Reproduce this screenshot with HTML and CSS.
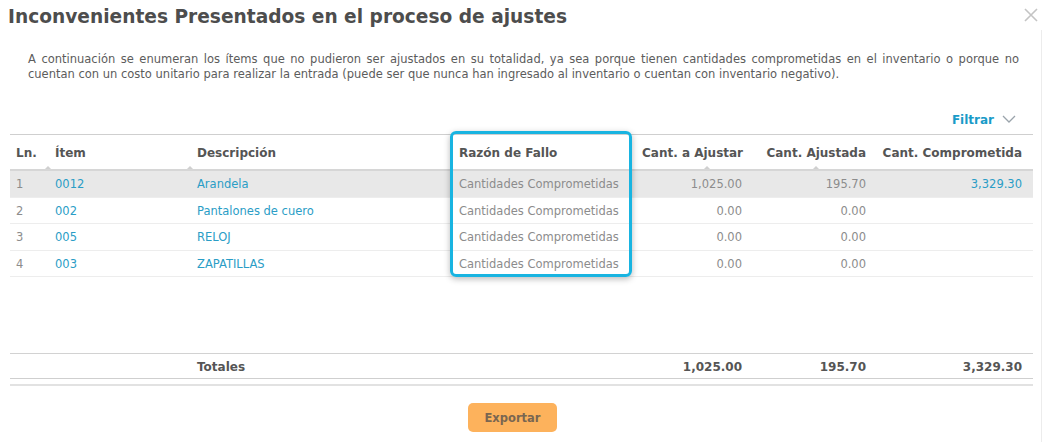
FILE: index.html
```html
<!DOCTYPE html>
<html lang="es">
<head>
    <meta charset="UTF-8">
    <meta name="viewport" content="width=device-width, initial-scale=1.0">
    <title>Inconvenientes Presentados</title>
    <link rel="stylesheet" href="styles.css">
</head>
<body>
    <div class="dialog">
        <div class="dialog-head">
            <h1>Inconvenientes Presentados en el proceso de ajustes</h1>
            <button class="close" title="Cerrar">
                <svg width="14" height="14" viewBox="0 0 14 14"><path d="M1 1L13 13M13 1L1 13" stroke="#c4c4c4" stroke-width="1.6" fill="none"/></svg>
            </button>
        </div>
        <div class="dialog-body">
            <p class="intro">A continuación se enumeran los ítems que no pudieron ser ajustados en su totalidad, ya sea porque tienen cantidades comprometidas en el inventario o porque no cuentan con un costo unitario para realizar la entrada (puede ser que nunca han ingresado al inventario o cuentan con inventario negativo).</p>

            <div class="toolbar">
                <a class="filter" href="#">Filtrar
                    <svg width="14" height="8" viewBox="0 0 14 8"><path d="M1 1L7 7L13 1" stroke="#9aa3ab" stroke-width="1.3" fill="none"/></svg>
                </a>
            </div>

            <div class="grid-wrap">
                <table class="grid">
                    <colgroup>
                        <col class="c-ln"><col class="c-item"><col class="c-desc"><col class="c-reason">
                        <col class="c-qty"><col class="c-adj"><col class="c-comp">
                    </colgroup>
                    <thead>
                        <tr>
                            <th>Ln.<span class="tick tick-end"></span></th>
                            <th>Ítem<span class="tick tick-end"></span></th>
                            <th>Descripción</th>
                            <th>Razón de Fallo</th>
                            <th class="num">Cant. a Ajustar<span class="tick tick-qty"></span></th>
                            <th class="num">Cant. Ajustada<span class="tick tick-adj"></span></th>
                            <th class="num last">Cant. Comprometida</th>
                        </tr>
                    </thead>
                    <tbody>
                        <tr class="selected">
                            <td class="muted">1</td>
                            <td><a href="#">0012</a></td>
                            <td><a href="#">Arandela</a></td>
                            <td class="muted">Cantidades Comprometidas</td>
                            <td class="num muted">1,025.00</td>
                            <td class="num muted">195.70</td>
                            <td class="num last"><a href="#">3,329.30</a></td>
                        </tr>
                        <tr>
                            <td class="muted">2</td>
                            <td><a href="#">002</a></td>
                            <td><a href="#">Pantalones de cuero</a></td>
                            <td class="muted">Cantidades Comprometidas</td>
                            <td class="num muted">0.00</td>
                            <td class="num muted">0.00</td>
                            <td class="num last"></td>
                        </tr>
                        <tr>
                            <td class="muted">3</td>
                            <td><a href="#">005</a></td>
                            <td><a href="#">RELOJ</a></td>
                            <td class="muted">Cantidades Comprometidas</td>
                            <td class="num muted">0.00</td>
                            <td class="num muted">0.00</td>
                            <td class="num last"></td>
                        </tr>
                        <tr>
                            <td class="muted">4</td>
                            <td><a href="#">003</a></td>
                            <td><a href="#">ZAPATILLAS</a></td>
                            <td class="muted">Cantidades Comprometidas</td>
                            <td class="num muted">0.00</td>
                            <td class="num muted">0.00</td>
                            <td class="num last"></td>
                        </tr>
                        <tr class="filler"><td colspan="7"></td></tr>
                    </tbody>
                    <tfoot>
                        <tr>
                            <td></td>
                            <td></td>
                            <td>Totales</td>
                            <td></td>
                            <td class="num">1,025.00</td>
                            <td class="num">195.70</td>
                            <td class="num last">3,329.30</td>
                        </tr>
                    </tfoot>
                </table>
                <div class="grid-end"></div>
                <!-- resaltado de la columna -->
                <div class="highlight"></div>
            </div>

            <div class="actions">
                <button class="btn-export">Exportar</button>
            </div>
        </div>
    </div>
</body>
</html>
```
FILE: styles.css
```css
body {
    margin: 0;
    background: #fff;
    font-family: 'DejaVu Sans', Verdana, sans-serif;
    font-size: 11.5px;
    color: #666;
}
.dialog {
    width: 1044px;
    height: 442px;
    overflow: hidden;
}
.dialog-head {
    display: flex;
    justify-content: space-between;
    align-items: flex-start;
    padding: 4px 6px 0 8px;
}
.dialog-head h1 {
    margin: 0;
    font-size: 18.6px;
    line-height: 26px;
    font-weight: bold;
    color: #4d4d4d;
}
.close {
    border: none;
    background: none;
    padding: 0;
    margin-top: 4px;
    width: 14px;
    height: 14px;
    cursor: pointer;
}
.close svg { display: block; }
.dialog-body {
    width: 1041px;
    border-right: 1px solid #ececec;
    min-height: 420px;
}
.intro {
    margin: 0;
    padding: 22px 22px 0 28px;
    line-height: 15px;
    text-align: justify;
    color: #5c5c5c;
}
.toolbar {
    display: flex;
    justify-content: flex-end;
    padding: 24px 25px 0 0;
    height: 28px;
}
.filter {
    display: flex;
    align-items: center;
    gap: 8px;
    color: #1a9bc8;
    font-weight: bold;
    font-size: 12px;
    text-decoration: none;
    line-height: 16px;
}
.filter svg { display: block; margin-top: -2px; }

.grid-wrap {
    position: relative;
    width: 1023px;
    margin-left: 10px;
}
.grid {
    width: 1023px;
    table-layout: fixed;
    border-collapse: collapse;
    border-top: 1px solid #cfcfcf;
}
.c-ln { width: 39px; }
.c-item { width: 142px; }
.c-desc { width: 262px; }
.c-reason { width: 183px; }
.c-qty { width: 112px; }
.c-adj { width: 124px; }
.c-comp { width: 161px; }

.grid th {
    position: relative;
    height: 32px;
    padding: 2px 6px 0;
    text-align: left;
    font-size: 12px;
    font-weight: bold;
    color: #555;
    white-space: nowrap;
    border-bottom: 2px solid #d6d6d6;
}
.grid td {
    height: 24.5px;
    padding: 1px 6px 0;
    white-space: nowrap;
    border-bottom: 1px solid #ededed;
}
.grid .num { text-align: right; }
.grid .last { padding-right: 11px; }
.grid a {
    color: #2a9dc6;
    text-decoration: none;
}
.grid .muted { color: #8c8c8c; }
.grid tr.selected td { background: #e8e8e8; }
.grid tr.filler td {
    height: 75px;
    border-bottom: 1px solid #d2d2d2;
}
.grid tfoot td {
    height: 23px;
    font-weight: bold;
    color: #555;
    font-size: 12px;
    border-bottom: 1px solid #cfcfcf;
}
.grid-end {
    margin-top: 5px;
    border-top: 2px solid #e2e2e2;
}

/* pequeños marcadores de columna */
.tick {
    position: absolute;
    bottom: 0;
    width: 0;
    height: 0;
    border-left: 3px solid transparent;
    border-right: 3px solid transparent;
    border-bottom: 3px solid #d0d0d0;
}
.tick-end { right: -2px; }
.tick-qty { right: 38px; }
.tick-adj { right: 53px; }

.highlight {
    position: absolute;
    left: 440px;
    top: -3px;
    width: 176px;
    height: 140px;
    border: 3px solid #18b4e1;
    border-radius: 6px;
    box-shadow: 0 2px 6px rgba(0, 0, 0, 0.28);
    pointer-events: none;
}

.actions {
    display: flex;
    justify-content: center;
    padding: 17px 16px 0 0;
}
.btn-export {
    width: 89px;
    height: 29px;
    border: none;
    border-radius: 5px;
    background: #fdb25c;
    color: #7a6651;
    font-family: 'DejaVu Sans', Verdana, sans-serif;
    font-size: 11.5px;
    font-weight: bold;
    cursor: pointer;
}
```
